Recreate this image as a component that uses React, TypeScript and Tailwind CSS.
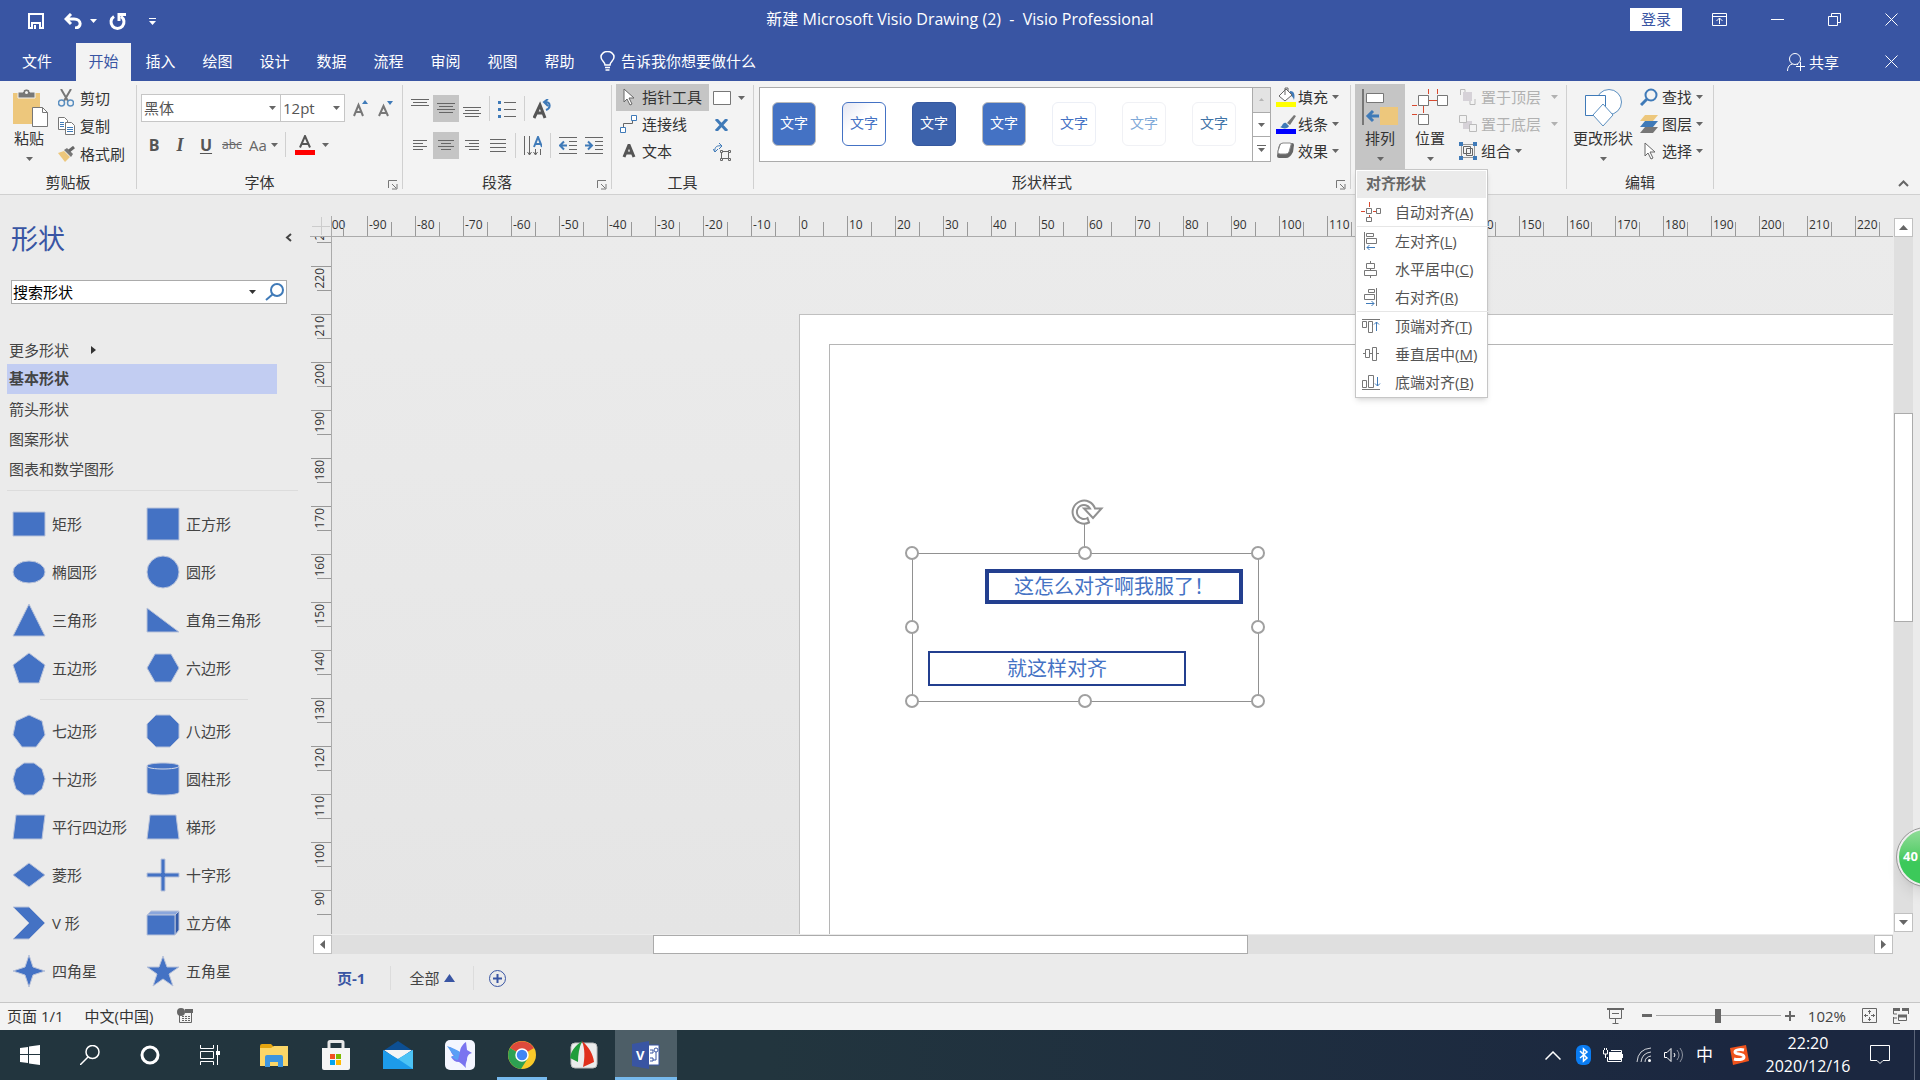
import React from "react";

const BLUE = "#3955a3";

interface IconProps {
  w: number;
  h: number;
  children: React.ReactNode;
  className?: string;
}

const Icon: React.FC<IconProps> = ({ w, h, children, className }) => (
  <svg
    width={w}
    height={h}
    viewBox={`0 0 ${w} ${h}`}
    fill="none"
    stroke="currentColor"
    className={className ? `shrink-0 ${className}` : "shrink-0"}
    aria-hidden="true"
  >
    {children}
  </svg>
);

const Caret = ({ className = "text-[#666]" }: { className?: string }) => (
  <Icon w={7} h={4} className={className}>
    <path d="M0 0h7L3.5 4z" fill="currentColor" stroke="none" />
  </Icon>
);

const Divider = () => <div className="w-px shrink-0 bg-[#d0d0d0] mt-1 mb-[5px]" />;

const SmallDivider = () => <div className="w-px h-[25px] shrink-0 bg-[#d0d0d0] mx-1" />;

const Launcher = () => (
  <button aria-label="更多选项" className="absolute right-1 bottom-1 text-[#777]">
    <Icon w={10} h={10}>
      <path d="M.5 8V.5H9M4 4l4 4M9 4v5H4" />
    </Icon>
  </button>
);

interface GroupProps {
  label: string;
  className: string;
  launcher?: boolean;
  children: React.ReactNode;
}

const Group: React.FC<GroupProps> = ({ label, className, launcher, children }) => (
  <div className={`relative shrink-0 flex flex-col pt-[3px] ${className}`}>
    <div className="h-[87px] flex">{children}</div>
    <div className={`h-[22px] text-center leading-[22px] ${launcher ? "pr-5" : ""}`}>{label}</div>
    {launcher && <Launcher />}
  </div>
);

interface RowButtonProps {
  icon: React.ReactNode;
  label: string;
  caret?: boolean;
  disabled?: boolean;
  wideCaret?: boolean;
}

const RowButton: React.FC<RowButtonProps> = ({ icon, label, caret, disabled, wideCaret }) => (
  <button
    disabled={disabled}
    className={`h-[27px] pb-[2px] flex items-center whitespace-nowrap ${disabled ? "text-[#b1b1b1]" : ""}`}
  >
    <span className="w-[22px] flex shrink-0">{icon}</span>
    {label}
    {caret && (
      <span className={wideCaret ? "ml-[10px]" : "ml-1"}>
        <Caret className={disabled ? "text-[#b1b1b1]" : "text-[#666]"} />
      </span>
    )}
  </button>
);

const SquareButton = ({
  label,
  active,
  children,
}: {
  label: string;
  active?: boolean;
  children: React.ReactNode;
}) => (
  <button
    aria-label={label}
    className={`w-[26px] h-[27px] shrink-0 flex items-center justify-center text-[#666] ${
      active ? "bg-[#c5c5c5]" : ""
    }`}
  >
    {children}
  </button>
);

const BigButton = ({
  label,
  icon,
  className,
}: {
  label: string;
  icon: React.ReactNode;
  className: string;
}) => (
  <button className={`h-[85px] shrink-0 flex flex-col items-center pt-[5px] ${className}`}>
    {icon}
    <span className="leading-[22px] whitespace-nowrap">{label}</span>
    <span className="mt-2">
      <Caret />
    </span>
  </button>
);

const TitleBar = () => (
  <div className="h-10 grid grid-cols-[1fr_auto_1fr] items-center text-white">
    <div className="flex items-center pl-7 pt-[2px]">
      <button aria-label="保存" className="mr-5">
        <Icon w={16} h={16}>
          <path d="M1 1h14v14H1z" strokeWidth="2" />
          <path d="M3 9h10v6H3z" fill="currentColor" stroke="none" />
          <path d="M5 11h6v5H5z" fill={BLUE} stroke="none" />
          <path d="M6 12h2v4H6z" fill="currentColor" stroke="none" />
        </Icon>
      </button>
      <button aria-label="撤消">
        <Icon w={18} h={16}>
          <path d="M2 6h8c8 0 8 9 1 9M7 1L2 6l5 5" strokeWidth="3" />
        </Icon>
      </button>
      <button aria-label="撤消列表" className="ml-2 mr-3">
        <Caret className="text-white" />
      </button>
      <button aria-label="重复">
        <Icon w={18} h={17}>
          <path d="M5 3.5a6.500 6.500 0 1 0 7 0" strokeWidth="3" />
          <path d="M10 8V1.500h7" strokeWidth="3" />
        </Icon>
      </button>
      <button aria-label="自定义快速访问工具栏" className="ml-[22px]">
        <Icon w={7} h={7}>
          <path d="M0 .5h7" />
          <path d="M0 3h7L3.5 7z" fill="currentColor" stroke="none" />
        </Icon>
      </button>
    </div>
    <h1 className="text-[16px] whitespace-pre pb-[2px]">新建 Microsoft Visio Drawing (2)  -  Visio Professional</h1>
    <div className="flex items-center justify-end pr-[22px] pb-px">
      <button className="h-[23px] w-[52px] bg-white text-[#3955a3] leading-[23px] mr-[30px]">登录</button>
      <button aria-label="功能区显示选项" className="mr-11">
        <Icon w={15} h={13}>
          <path d="M.5.5h14v12H.5zM.5 3.5h14M7.5 11V5M4.5 8l3-3 3 3" />
        </Icon>
      </button>
      <button aria-label="最小化" className="mr-11">
        <Icon w={13} h={13}>
          <path d="M0 6.5h13" />
        </Icon>
      </button>
      <button aria-label="还原" className="mr-11">
        <Icon w={13} h={13}>
          <path d="M.5 3.5h9v9h-9zM3.5 3V.5h9v9H10" />
        </Icon>
      </button>
      <button aria-label="关闭">
        <Icon w={13} h={13}>
          <path d="M.5.5l12 12M12.5.5l-12 12" />
        </Icon>
      </button>
    </div>
  </div>
);

const TABS = ["开始", "插入", "绘图", "设计", "数据", "流程", "审阅", "视图", "帮助"];

const TabBar = () => (
  <div className="h-[41px] flex items-end text-white">
    <button className="w-[74px] h-[38px] pb-[3px] mr-[2px]">文件</button>
    <div className="flex gap-[2px]">
      {TABS.map((tab, index) => (
        <button
          key={tab}
          className={`w-[55px] h-[38px] pb-[3px] ${index === 0 ? "bg-[#f3f3f3] text-[#3955a3]" : ""}`}
        >
          {tab}
        </button>
      ))}
    </div>
    <button className="h-[38px] ml-[13px] pb-[2px] flex items-center gap-[6px]">
      <Icon w={15} h={20}>
        <path d="M5 14c0-3-4-4-4-8a6.500 5.500 0 0 1 13 0c0 4-4 5-4 8zM5 16.500h5M5.500 19h4" strokeWidth="1.500" />
      </Icon>
      告诉我你想要做什么
    </button>
    <div className="flex-1" />
    <button className="h-[38px] pb-px flex items-center gap-1 mr-[46px]">
      <Icon w={18} h={18}>
        <circle cx="8" cy="6" r="5.500" />
        <path d="M.5 18c0-4 2-6.500 5-7M10 11l1 1M13.500 9v9M9 13.500h9" />
      </Icon>
      共享
    </button>
    <button aria-label="关闭窗口" className="h-[38px] pb-px mr-[22px]">
      <Icon w={13} h={13}>
        <path d="M.5.5l12 12M12.500.5l-12 12" />
      </Icon>
    </button>
  </div>
);

const ClipboardGroup = () => (
  <Group label="剪贴板" className="w-[136px]">
    <BigButton
      className="w-[38px] ml-[10px]"
      label="粘贴"
      icon={
        <Icon w={36} h={38} className="ml-1">
          <path d="M0 4h27v31H0z" fill="#edc77c" stroke="none" />
          <path d="M5 9V3h5c0-4 7-4 7 0h5v6z" fill="#777" stroke="#f3f3f3" />
          <circle cx="13.500" cy="3.500" r="1.500" fill="#f3f3f3" stroke="none" />
          <path d="M19.500 18.500h10l5 5v14h-15z" fill="#fff" stroke="#777" />
          <path d="M29.500 18.500v5h5" stroke="#777" />
        </Icon>
      }
    />
    <div className="ml-[10px] pt-px">
      <div className="h-7">
        <RowButton
          label="剪切"
          icon={
            <Icon w={16} h={18}>
              <path d="M3 0l7 12M13 0L6 12" stroke="#777" strokeWidth="2" />
              <circle cx="3.500" cy="14" r="3" stroke="#5b8fc0" strokeWidth="1.500" />
              <circle cx="12.500" cy="14" r="3" stroke="#5b8fc0" strokeWidth="1.500" />
            </Icon>
          }
        />
      </div>
      <div className="h-7">
        <RowButton
          label="复制"
          icon={
            <Icon w={18} h={18}>
              <path d="M.5.5h6l3 3v9h-9z" fill="#fff" stroke="#777" />
              <path d="M2 5.500h4M2 7.500h4M2 9.500h4" stroke="#3f7ab8" />
              <path d="M7.500 5.500h6l3 3v9h-9z" fill="#fff" stroke="#777" />
              <path d="M9 10.500h6M9 12.500h6M9 14.500h6" stroke="#3f7ab8" />
            </Icon>
          }
        />
      </div>
      <div className="h-7">
        <RowButton
          label="格式刷"
          icon={
            <Icon w={18} h={16}>
              <path d="M0 7l6-2 6 6-5 5z" fill="#edc77c" stroke="none" />
              <path d="M6 4l3-2 6 6-2 3z" fill="#777" stroke="none" />
              <path d="M11 5l5-4" stroke="#666" strokeWidth="3" />
            </Icon>
          }
        />
      </div>
    </div>
  </Group>
);

const FontGroup = () => (
  <Group label="字体" className="w-[265px]" launcher>
    <div className="pl-1 pt-[10px] text-[#555]">
      <div className="flex items-center h-7">
        <div className="relative flex">
          <select
            aria-label="字体"
            className="appearance-none w-[140px] h-7 bg-white border border-[#c6c6c6] pl-[2px] outline-none"
          >
            <option>黑体</option>
          </select>
          <span className="absolute right-[5px] top-3 pointer-events-none">
            <Caret />
          </span>
        </div>
        <div className="relative flex -ml-px mr-[3px]">
          <select
            aria-label="字号"
            className="appearance-none w-[65px] h-7 bg-white border border-[#c6c6c6] pl-[2px] outline-none"
          >
            <option>12pt</option>
          </select>
          <span className="absolute right-[5px] top-3 pointer-events-none">
            <Caret />
          </span>
        </div>
        <button aria-label="增大字号" className="w-[25px] flex justify-center">
          <Icon w={15} h={17}>
            <path d="M1 16L5.500 5 10 16M3 12h5" strokeWidth="2" stroke="#777" />
            <path d="M9 4l3-4 3 4z" fill="#3f7ab8" stroke="none" />
          </Icon>
        </button>
        <button aria-label="减小字号" className="w-[25px] flex justify-center">
          <Icon w={15} h={17}>
            <path d="M1 16L5.500 6 10 16M3 13h5" strokeWidth="2" stroke="#777" />
            <path d="M9 1h6l-3 4z" fill="#3f7ab8" stroke="none" />
          </Icon>
        </button>
      </div>
      <div className="flex items-center h-[27px] mt-[9px]">
        <SquareButton label="加粗">
          <b className="text-[16px] text-[#555]">B</b>
        </SquareButton>
        <SquareButton label="倾斜">
          <b className="italic font-['Liberation_Serif',serif] text-[18px] text-[#555]">I</b>
        </SquareButton>
        <SquareButton label="下划线">
          <b className="underline underline-offset-2 text-[16px] text-[#555]">U</b>
        </SquareButton>
        <SquareButton label="删除线">
          <span className="line-through text-[12px]">abc</span>
        </SquareButton>
        <button aria-label="更改大小写" className="flex items-center gap-1 ml-1 text-[#666]">
          Aa <Caret />
        </button>
        <div className="w-px h-[25px] bg-[#d0d0d0] ml-[7px] mr-[9px]" />
        <button aria-label="字体颜色" className="flex items-center gap-[7px]">
          <Icon w={20} h={20}>
            <path d="M5 12.500L10 1l5 11.500M7 9h6" strokeWidth="2" stroke="#555" />
            <path d="M0 15h20v5H0z" fill="#f00" stroke="none" />
          </Icon>
          <Caret />
        </button>
      </div>
    </div>
  </Group>
);

const Lines = ({ d, h = 13 }: { d: string; h?: number }) => (
  <Icon w={18} h={h}>
    <path d={d} stroke="#666" />
  </Icon>
);

const ParagraphGroup = () => (
  <Group label="段落" className="w-[208px]" launcher>
    <div className="pl-1 pt-[11px]">
      <div className="flex items-center h-[27px]">
        <SquareButton label="顶端对齐">
          <Lines h={20} d="M0 0.500h18M2 3.500h14M0 6.500h18" />
        </SquareButton>
        <SquareButton label="中部对齐" active>
          <Lines d="M0 1.500h18M2 4.500h14M0 7.500h18M2 10.500h14" />
        </SquareButton>
        <SquareButton label="底端对齐">
          <Lines h={20} d="M0 8.500h18M2 11.500h14M0 14.500h18M2 17.500h14" />
        </SquareButton>
        <SmallDivider />
        <SquareButton label="项目符号">
          <Icon w={18} h={18}>
            <path d="M6 2.500h12M6 9.500h12M6 16.500h12" stroke="#666" />
            <path d="M0 1h3v3H0zM0 8h3v3H0zM0 15h3v3H0z" fill="#3f7ab8" stroke="none" />
          </Icon>
        </SquareButton>
        <SmallDivider />
        <SquareButton label="旋转文本">
          <Icon w={19} h={20}>
            <path d="M1 19L7 6l5 13M3 14h8" strokeWidth="3" stroke="#555" />
            <path d="M13 11c5-2 5-8-1-8M15 0l-4 3 4 4" strokeWidth="2" stroke="#3f7ab8" />
          </Icon>
        </SquareButton>
      </div>
      <div className="flex items-center h-[27px] mt-[10px]">
        <SquareButton label="左对齐">
          <Lines d="M2 1.500h14M2 4.500h10M2 7.500h14M2 10.500h10" />
        </SquareButton>
        <SquareButton label="居中" active>
          <Lines d="M1 1.500h16M4 4.500h10M1 7.500h16M4 10.500h10" />
        </SquareButton>
        <SquareButton label="右对齐">
          <Lines d="M2 1.500h14M6 4.500h10M2 7.500h14M6 10.500h10" />
        </SquareButton>
        <SquareButton label="两端对齐">
          <Lines d="M1 .5h16M1 4.500h16M1 8.500h16M1 12.500h16" />
        </SquareButton>
        <SmallDivider />
        <SquareButton label="文字方向">
          <Icon w={18} h={20}>
            <path d="M.5 0v19M5.500 0v19M11.500 13v6M16.500 13v6M3.500 16l2 3 2-3M9.500 16l2 3 2-3" stroke="#666" />
            <path d="M10 11l4-10 4 10M11 8h6" strokeWidth="2" stroke="#3f7ab8" />
          </Icon>
        </SquareButton>
        <SmallDivider />
        <SquareButton label="减少缩进量">
          <Icon w={18} h={17}>
            <path d="M0 .5h18M10 4.500h8M10 8.500h8M10 12.500h8M0 16.500h18" stroke="#666" />
            <path d="M8 8.500H2M5 4.500l-4 4 4 4" stroke="#3f7ab8" strokeWidth="2" />
          </Icon>
        </SquareButton>
        <SquareButton label="增加缩进量">
          <Icon w={18} h={17}>
            <path d="M0 .5h18M10 4.500h8M10 8.500h8M10 12.500h8M0 16.500h18" stroke="#666" />
            <path d="M0 8.500h6M3 4.500l4 4-4 4" stroke="#3f7ab8" strokeWidth="2" />
          </Icon>
        </SquareButton>
      </div>
    </div>
  </Group>
);

const PointerIcon = () => (
  <Icon w={12} h={18}>
    <path d="M1 1v13l3-3 3 6 2-1-3-6h5z" fill="#fff" stroke="#666" />
  </Icon>
);

const ToolsGroup = () => (
  <Group label="工具" className="w-[141px]">
    <div className="pl-1">
      <div className="w-[93px] bg-[#c5c5c5] pl-[7px]">
        <button className="h-[27px] pb-[2px] flex items-center">
          <span className="w-[19px] flex">
            <PointerIcon />
          </span>
          指针工具
        </button>
      </div>
      <div className="pl-1">
        <RowButton
          label="连接线"
          icon={
            <Icon w={18} h={18}>
              <path d="M3.500 12V8.500h9V5" stroke="#666" />
              <path d="M11.500.5h5v5h-5zM.5 12.500h5v5h-5z" stroke="#3f7ab8" fill="#fff" />
            </Icon>
          }
        />
        <RowButton
          label="文本"
          icon={
            <Icon w={18} h={14}>
              <path d="M4 13L9 1l5 12M5 9h8" strokeWidth="3" stroke="#555" />
            </Icon>
          }
        />
      </div>
    </div>
    <div className="pl-1">
      <button aria-label="矩形" className="h-[27px] flex items-center gap-[7px]">
        <Icon w={18} h={14}>
          <path d="M.5.5h17v13H.5z" fill="#fff" stroke="#777" />
        </Icon>
        <Caret />
      </button>
      <button aria-label="连接点" className="h-[27px] flex items-center">
        <Icon w={18} h={12}>
          <path d="M3 0l11 12M14 0L3 12" stroke="#3f7ab8" strokeWidth="3" />
        </Icon>
      </button>
      <button aria-label="文本块" className="h-[27px] flex items-center">
        <Icon w={18} h={18}>
          <path d="M2 9C1 4 4 2 9 3M6 0l3 3-3 3M0 6l2 3 3-3" stroke="#3f7ab8" />
          <path d="M8.500 8.500h7v7h-7z" stroke="#666" />
          <path
            d="M7.500 7.500h2v2h-2zM15.500 7.500h2v2h-2zM7.500 15.500h2v2h-2zM15.500 15.500h2v2h-2z"
            fill="#f3f3f3"
            stroke="#666"
          />
        </Icon>
      </button>
    </div>
  </Group>
);

const STYLE_TILES = [
  "bg-[#4472c4] text-white border-[#bbb]",
  "bg-gradient-to-br from-[#e4e6f2] to-white to-40% text-[#4472c4] border-[#4472c4]",
  "bg-[#3c62ab] text-white border-[#35589e]",
  "bg-[#4472c4] text-white border-[#bbb]",
  "bg-white text-[#4472c4] border-[#eceff6]",
  "bg-white text-[#7fa9d8] border-[#f0f1f5]",
  "bg-white text-[#3f74a8] border-[#f0f1f5]",
];

const StylesGroup = () => (
  <Group label="形状样式" className="w-[596px]" launcher>
    <div className="mt-[3px] ml-[5px] w-[512px] h-[75px] flex bg-white border border-[#ababab]">
      <div className="flex-1 flex items-center gap-[26px] pl-3 pb-px">
        {STYLE_TILES.map((tile, index) => (
          <button key={index} className={`w-11 h-11 pb-[2px] rounded-md border text-[14px] ${tile}`}>
            文字
          </button>
        ))}
      </div>
      <div className="w-[18px] flex flex-col border-l border-[#ababab] divide-y divide-[#ababab]">
        <button aria-label="上一行" className="flex-1 flex items-center justify-center bg-[#e3e3e3]">
          <Icon w={5} h={3}>
            <path d="M0 3h5L2.500 0z" fill="#b5b5b5" stroke="none" />
          </Icon>
        </button>
        <button aria-label="下一行" className="flex-1 flex items-center justify-center">
          <Caret />
        </button>
        <button aria-label="其他样式" className="flex-1 flex items-center justify-center text-[#666]">
          <Icon w={9} h={8}>
            <path d="M0 .5h9" />
            <path d="M1 3h7L4.500 7z" fill="currentColor" stroke="none" />
          </Icon>
        </button>
      </div>
    </div>
    <div className="ml-[5px]">
      <RowButton
        label="填充"
        caret
        icon={
          <Icon w={20} h={20}>
            <path d="M14 4c5 0 5 5 4 9-1-3-2-4-5-5z" fill="#3f7ab8" stroke="none" />
            <path d="M3 9l7-7 6 6-7 6z" fill="#fff" stroke="#666" />
            <path d="M9 8V1h3v3" stroke="#666" />
            <path d="M0 15h20v5H0z" fill="#ff0" stroke="none" />
          </Icon>
        }
      />
      <RowButton
        label="线条"
        caret
        icon={
          <Icon w={20} h={20}>
            <path d="M4 13c3 0 2-5 6-4l3 3c-1 3-6 3-9 1z" fill="#3f7ab8" stroke="none" />
            <path d="M11 9l7-8 2 1-6 9z" fill="#777" stroke="none" />
            <path d="M0 15h20v5H0z" fill="#00f" stroke="none" />
          </Icon>
        }
      />
      <RowButton
        label="效果"
        caret
        icon={
          <Icon w={19} h={17}>
            <path d="M6 1h10q2 0 2 2l-1 7q-3 6-7 6H3q-2 0-2-2l1-7q1-6 4-6z" fill="#666" stroke="none" />
            <path d="M7 1h7q2 0 1 2l-2 7q-1 2-3 2H4q-3 0-2-3l2-6q1-2 3-2z" fill="#fff" stroke="#888" />
          </Icon>
        }
      />
    </div>
  </Group>
);

const MENU_ITEMS = [
  {
    label: "自动对齐",
    hotkey: "A",
    icon: (
      <>
        <path d="M0 9.500h4M12 9.500h3M8.500 0v5M8.500 13v2" stroke="#d8492f" />
        <path d="M5.500 6.500h5v5h-5zM15.500 6.500h4v5h-4zM5.500 15.500h5v4h-5z" stroke="#777" />
      </>
    ),
  },
  {
    label: "左对齐",
    hotkey: "L",
    divided: true,
    icon: (
      <>
        <path d="M3.500 1v18M5.500 2.500h7v3h-7zM5.500 7.500h10v5h-10z" stroke="#777" />
        <path d="M14 16.500H6M8.500 14L6 16.500 8.500 19" stroke="#3f7ab8" />
      </>
    ),
  },
  {
    label: "水平居中",
    hotkey: "C",
    icon: <path d="M9.500 2v2M5.500 4.500h8v5h-8zM9.500 10v2M3.500 11.500h12v5h-12zM9.500 17v2" stroke="#777" />,
  },
  {
    label: "右对齐",
    hotkey: "R",
    icon: (
      <>
        <path d="M15.500 1v18M7.500 2.500h6v3h-6zM3.500 7.500h10v5h-10z" stroke="#777" />
        <path d="M5 16.500h8M10.500 14l2.500 2.500-2.500 2.500" stroke="#3f7ab8" />
      </>
    ),
  },
  {
    label: "顶端对齐",
    hotkey: "T",
    divided: true,
    icon: (
      <>
        <path d="M1 3.500h18M1.500 5.500h4v6h-4zM7.500 5.500h4v11h-4z" stroke="#777" />
        <path d="M15.500 15V6M13 8.500L15.500 6 18 8.500" stroke="#3f7ab8" />
      </>
    ),
  },
  {
    label: "垂直居中",
    hotkey: "M",
    icon: <path d="M2 9.500h2M4.500 5.500h4v8h-4zM9 9.500h2M11.500 3.500h4v13h-4zM16 9.500h2" stroke="#777" />,
  },
  {
    label: "底端对齐",
    hotkey: "B",
    icon: (
      <>
        <path d="M1 17.500h18M1.500 8.500h4v7h-4zM7.500 3.500h5v12h-5z" stroke="#777" />
        <path d="M16.500 5v9M14 11.500l2.500 2.500 2.500-2.500" stroke="#3f7ab8" />
      </>
    ),
  },
];

const AlignMenu = () => (
  <div
    role="menu"
    className="absolute z-20 top-[85px] left-0 w-[133px] p-px bg-white border border-[#c6c6c6] shadow-md text-[#555]"
  >
    <div className="h-[27px] pl-[9px] leading-[25px] bg-[#ebebeb] font-bold text-[#666]">对齐形状</div>
    {MENU_ITEMS.map((item) => (
      <button
        key={item.label}
        role="menuitem"
        className={`w-full h-7 flex items-center pl-1 whitespace-nowrap ${
          item.divided ? "box-content border-t border-[#e6e6e6]" : ""
        }`}
      >
        <Icon w={20} h={20} className="mr-[14px]">
          {item.icon}
        </Icon>
        {item.label}(<u>{item.hotkey}</u>)
      </button>
    ))}
  </div>
);

const ArrangeGroup = () => (
  <div className="relative shrink-0 w-[215px] flex pt-[3px] pl-1">
    <div className="relative">
      <BigButton
        className="w-[50px] bg-[#c5c5c5]"
        label="排列"
        icon={
          <Icon w={38} h={38}>
            <path d="M2 0v36" stroke="#777" strokeWidth="2" />
            <path d="M5.500 4.500h17v9h-17z" fill="#fff" stroke="#777" />
            <path d="M19 18h18v18H19z" fill="#edc77c" stroke="none" />
            <path d="M18 27H7M12 22l-5 5 5 5" stroke="#3f7ab8" strokeWidth="3" />
          </Icon>
        }
      />
      <AlignMenu />
    </div>
    <BigButton
      className="w-[50px]"
      label="位置"
      icon={
        <Icon w={38} h={38}>
          <path d="M17.500 0v5M26.500 0v5M18 11.500h8M1 16.500h5M12.500 17v7M1 25.500h5" stroke="#d8492f" />
          <path
            d="M7.500 6.500h10v10h-10zM26.500 6.500h10v10h-10zM7.500 25.500h10v10h-10z"
            fill="#fff"
            stroke="#777"
          />
        </Icon>
      }
    />
    <div className="ml-1">
      <RowButton
        label="置于顶层"
        caret
        wideCaret
        disabled
        icon={
          <Icon w={18} h={18}>
            <path d="M1.500 7V1.500H6V5M16 11v5.500h-5V13" stroke="#bbb" />
            <path d="M4 4h9v9H4z" fill="#d6d2d8" stroke="none" />
          </Icon>
        }
      />
      <RowButton
        label="置于底层"
        caret
        wideCaret
        disabled
        icon={
          <Icon w={19} h={19}>
            <path d="M4 7h9v8H4z" fill="#d6d2d8" stroke="none" />
            <path d="M.5 1.500h7v7h-7zM10.500 10.500h7v7h-7z" fill="#f3f3f3" stroke="#bbb" />
          </Icon>
        }
      />
      <RowButton
        label="组合"
        caret
        icon={
          <Icon w={18} h={18}>
            <path d="M2.500 2.500h13v13h-13z" stroke="#999" />
            <path d="M4.500 4.500h7v7h-7zM7.500 6.500h6v7h-6z" stroke="#666" />
            <path d="M0 0h4v4H0zM14 0h4v4h-4zM0 14h4v4H0zM14 14h4v4h-4z" fill="#3f7ab8" stroke="none" />
          </Icon>
        }
      />
    </div>
  </div>
);

const EditGroup = () => (
  <Group label="编辑" className="w-[146px]">
    <BigButton
      className="w-[60px] ml-[6px]"
      label="更改形状"
      icon={
        <Icon w={40} h={38}>
          <circle cx="26" cy="13" r="12.500" fill="#fff" stroke="#5b8fc0" />
          <path d="M2.500 6.500h20v20h-20z" fill="#fff" stroke="#3f7ab8" />
          <path d="M20 15l10 11-10 11-10-11z" fill="#fff" stroke="#5b8fc0" />
        </Icon>
      }
    />
    <div className="ml-[7px]">
      <RowButton
        label="查找"
        caret
        icon={
          <Icon w={18} h={18}>
            <circle cx="11" cy="7" r="5.500" stroke="#3f7ab8" strokeWidth="2" />
            <path d="M7 11l-6 6" stroke="#3f7ab8" strokeWidth="3" />
          </Icon>
        }
      />
      <RowButton
        label="图层"
        caret
        icon={
          <Icon w={18} h={18}>
            <path d="M5 12h13l-5 6H0z" fill="#777" stroke="none" />
            <path d="M5 6h13l-5 6H0z" fill="#3f7ab8" stroke="none" />
            <path d="M5 0h13l-5 6H0z" fill="#edc77c" stroke="none" />
          </Icon>
        }
      />
      <RowButton
        label="选择"
        caret
        icon={
          <span className="pl-1">
            <PointerIcon />
          </span>
        }
      />
    </div>
  </Group>
);

const Ribbon = () => (
  <div className="relative h-[114px] shrink-0 flex bg-[#f3f3f3] border-b border-[#d0d0d0] text-[#333]">
    <ClipboardGroup />
    <Divider />
    <FontGroup />
    <Divider />
    <ParagraphGroup />
    <Divider />
    <ToolsGroup />
    <Divider />
    <StylesGroup />
    <Divider />
    <ArrangeGroup />
    <Divider />
    <EditGroup />
    <Divider />
    <button aria-label="折叠功能区" className="ml-auto self-end mr-[11px] mb-[7px] text-[#666]">
      <Icon w={11} h={7}>
        <path d="M1 6l4.500-4.500L10 6" strokeWidth="2" />
      </Icon>
    </button>
  </div>
);

const STENCILS = ["箭头形状", "图案形状", "图表和数学图形"];

interface ShapeItem {
  name: string;
  shape: React.ReactNode;
}

const BASIC_SHAPES: ShapeItem[] = [
  { name: "矩形", shape: <path d="M1 5h32v24H1z" /> },
  { name: "正方形", shape: <path d="M1 1h32v32H1z" /> },
  { name: "椭圆形", shape: <ellipse cx="17" cy="17" rx="16" ry="11" /> },
  { name: "圆形", shape: <circle cx="17" cy="17" r="16" /> },
  { name: "三角形", shape: <polygon points="17,1 33,33 1,33" /> },
  { name: "直角三角形", shape: <polygon points="1,5 33,29 1,29" /> },
  { name: "五边形", shape: <polygon points="17,2 33,14 27,32 7,32 1,14" /> },
  { name: "六边形", shape: <polygon points="1,17 9,3 25,3 33,17 25,31 9,31" /> },
];

const MORE_SHAPES: ShapeItem[] = [
  { name: "七边形", shape: <polygon points="17,1 30,7 33,21 24,33 10,33 1,21 4,7" /> },
  { name: "八边形", shape: <polygon points="10,1 24,1 33,10 33,24 24,33 10,33 1,24 1,10" /> },
  { name: "十边形", shape: <polygon points="12,1 22,1 30,7 33,17 30,27 22,33 12,33 4,27 1,17 4,7" /> },
  {
    name: "圆柱形",
    shape: (
      <>
        <path d="M1 4c0-4 32-4 32 0v26c0 4-32 4-32 0z" />
        <path d="M1 4c0 4 32 4 32 0" stroke="#d5dae8" />
      </>
    ),
  },
  { name: "平行四边形", shape: <polygon points="4,5 33,5 30,29 1,29" /> },
  { name: "梯形", shape: <polygon points="4,5 30,5 33,29 1,29" /> },
  { name: "菱形", shape: <polygon points="17,5 33,17 17,29 1,17" /> },
  { name: "十字形", shape: <path d="M15 1h4v14h14v4H19v14h-4V19H1v-4h14z" /> },
  { name: "V 形", shape: <polygon points="1,1 17,1 33,17 17,33 1,33 17,17" /> },
  {
    name: "立方体",
    shape: (
      <>
        <path d="M1 9l4-4h28l-4 4z" fill="#8aa6dc" />
        <path d="M29 9l4-4v19l-4 5z" fill="#345ba8" />
        <path d="M1 9h28v20H1z" />
      </>
    ),
  },
  { name: "四角星", shape: <polygon points="17,1 21,13 33,17 21,21 17,33 13,21 1,17 13,13" /> },
  { name: "五角星", shape: <polygon points="17,2 21,13 33,13 23,20 27,32 17,25 7,32 11,20 1,13 13,13" /> },
];

const ShapeGrid = ({ items }: { items: ShapeItem[] }) => (
  <div className="grid grid-cols-[134px_1fr] pl-3">
    {items.map((item) => (
      <button key={item.name} className="h-12 flex items-center gap-[6px]">
        <svg width="34" height="34" viewBox="0 0 34 34" fill="#4472c4" stroke="#b9c3da" aria-hidden="true">
          {item.shape}
        </svg>
        {item.name}
      </button>
    ))}
  </div>
);

const ShapesPanel = () => (
  <aside className="w-[310px] shrink-0 flex flex-col pt-6 text-[#444]">
    <div className="h-10 flex items-center justify-between pl-[11px] pr-[18px]">
      <h2 className="text-[27px] leading-10 text-[#3955a3]">形状</h2>
      <button aria-label="折叠形状窗口" className="pb-1">
        <Icon w={7} h={9}>
          <path d="M6 1L2 4.500 6 8" strokeWidth="2" />
        </Icon>
      </button>
    </div>
    <div className="mt-[21px] ml-[11px] w-[276px] h-6 flex items-center bg-white border border-[#ababab] text-black">
      <input
        aria-label="搜索形状"
        defaultValue="搜索形状"
        className="flex-1 min-w-0 h-5 pl-px outline-none bg-transparent"
      />
      <button aria-label="搜索选项" className="mr-[9px]">
        <Caret className="text-[#333]" />
      </button>
      <button aria-label="搜索" className="mr-[2px]">
        <Icon w={19} h={18}>
          <circle cx="12" cy="7" r="6" stroke="#3f7ab8" strokeWidth="2" />
          <path d="M8 11l-7 6" stroke="#3f7ab8" strokeWidth="2" />
        </Icon>
      </button>
    </div>
    <div className="mt-[31px] pl-[7px] flex flex-col">
      <button className="h-[29px] pl-[2px] flex items-center gap-[22px]">
        更多形状
        <Icon w={5} h={8}>
          <path d="M0 0v8l5-4z" fill="#333" stroke="none" />
        </Icon>
      </button>
      <button className="w-[270px] h-[30px] pl-[2px] pb-[2px] text-left font-bold bg-[#c2cdf2]">基本形状</button>
      {STENCILS.map((name) => (
        <button key={name} className="h-[30px] pl-[2px] text-left">
          {name}
        </button>
      ))}
    </div>
    <div className="mt-[6px] ml-[7px] mr-3 h-px bg-[#dcdcdc]" />
    <div className="mt-[9px]">
      <ShapeGrid items={BASIC_SHAPES} />
    </div>
    <div className="mt-[7px] ml-10 w-[208px] h-px bg-[#dcdcdc]" />
    <div className="mt-[7px]">
      <ShapeGrid items={MORE_SHAPES} />
    </div>
  </aside>
);

const H_MARKS = Array.from({ length: 33 }, (_, i) => -100 + i * 10);
const V_MARKS = Array.from({ length: 15 }, (_, i) => 230 - i * 10);

const HorizontalRuler = () => (
  <div className="flex-1 min-w-0 overflow-hidden border-b border-[#ababab]">
    <div className="flex items-end h-5 -ml-[13px] text-[12px] leading-[18px] text-[#333]">
      {H_MARKS.map((mark) => (
        <div key={mark} className="w-12 shrink-0 flex items-end">
          <div className="w-6 h-5 pl-px border-l border-[#999] whitespace-nowrap">{mark}</div>
          <div className="w-6 h-[14px] border-l border-[#999]" />
        </div>
      ))}
    </div>
  </div>
);

const VerticalRuler = () => (
  <div className="w-[22px] shrink-0 overflow-hidden border-r border-[#ababab]">
    <div className="flex flex-col -mt-[19px] text-[12px] leading-[18px] text-[#333]">
      {V_MARKS.map((mark) => (
        <div key={mark} className="h-12 shrink-0 flex flex-col items-end">
          <div className="w-5 h-6 pt-px border-t border-[#999]">
            <span className="block [writing-mode:vertical-rl] rotate-180 h-fit">{mark}</span>
          </div>
          <div className="w-[14px] h-6 border-t border-[#999]" />
        </div>
      ))}
    </div>
  </div>
);

const HANDLES = [
  "-left-2 -top-2",
  "left-[165px] -top-2",
  "-right-[7px] -top-2",
  "-left-2 top-[66px]",
  "-right-[7px] top-[66px]",
  "-left-2 -bottom-[7px]",
  "left-[165px] -bottom-[7px]",
  "-right-[7px] -bottom-[7px]",
];

const Canvas = () => (
  <div className="relative flex-1 min-w-0 overflow-hidden bg-gradient-to-b from-[#ebebeb] to-[#e5e5e5]">
    <div className="absolute left-[467px] top-[77px] right-0 bottom-0 bg-white border-l border-t border-[#c0c0c0]">
      <div className="w-full h-full pl-[29px] pt-[29px]">
        <div className="w-full h-full border-l border-t border-[#b5b5b5]" />
      </div>
    </div>
    {/* selected shapes */}
    <div className="absolute left-[653px] top-[332px] w-[258px] h-[35px] border-4 border-[#233f8f] text-[#4472c4] text-[20px] leading-[27px] text-center whitespace-nowrap">
      这怎么对齐啊我服了！
    </div>
    <div className="absolute left-[596px] top-[414px] w-[258px] h-[35px] border-2 border-[#233f8f] text-[#4472c4] text-[20px] leading-[31px] text-center whitespace-nowrap">
      就这样对齐
    </div>
    <div className="absolute left-[580px] top-[316px] w-[347px] h-[149px] border border-[#919191]">
      <div className="absolute left-[171px] -top-[30px] w-px h-[30px] bg-[#919191]" />
      <Icon w={34} h={28} className="absolute left-[158px] -top-[56px] text-[#919191]">
        <path
          d="M18 24.500A11.500 11.500 0 1 1 24 10.500h6.500L22 20l-9-9.500h6A7 7 0 1 0 16.500 20z"
          fill="#fff"
          strokeWidth="2"
        />
      </Icon>
      {HANDLES.map((place) => (
        <span key={place} className={`absolute w-[14px] h-[14px] rounded-full bg-white border-2 border-[#a0a0a0] ${place}`} />
      ))}
    </div>
  </div>
);

const ScrollButton = ({ label, d }: { label: string; d: string }) => (
  <button
    aria-label={label}
    className="w-[19px] h-[19px] shrink-0 flex items-center justify-center bg-white border border-[#c0c0c0] text-[#666]"
  >
    <Icon w={9} h={9}>
      <path d={d} fill="currentColor" stroke="none" />
    </Icon>
  </button>
);

const Workspace = () => (
  <section className="flex-1 min-w-0 flex flex-col">
    <div className="flex-1 min-h-0 flex pr-[7px]">
      <div className="flex-1 min-w-0 flex flex-col pt-[21px]">
        <div className="h-[21px] shrink-0 flex">
          <div className="w-[22px] shrink-0 border-r border-b border-[#ababab]">
            <Icon w={20} h={20}>
              <path d="M2 10.500h18M11.500 1v18" stroke="#ccc" />
            </Icon>
          </div>
          <HorizontalRuler />
        </div>
        <div className="flex-1 min-h-0 flex">
          <VerticalRuler />
          <Canvas />
        </div>
        <div className="h-5 shrink-0 flex items-end pl-[3px]">
          <ScrollButton label="向左滚动" d="M7 0v9L2 4.500z" />
          <div className="flex-1 h-[19px] bg-[#dfdfdf] flex">
            <div className="w-[20.8%]" />
            <div className="w-[38.6%] bg-white border border-[#ababab]" />
          </div>
          <ScrollButton label="向右滚动" d="M2 0v9l5-4.500z" />
        </div>
      </div>
      <div className="w-5 shrink-0 flex flex-col pl-px pt-[23px] pb-[22px]">
        <ScrollButton label="向上滚动" d="M0 7h9L4.500 2z" />
        <div className="flex-1 bg-[#dfdfdf]">
          <div className="h-[26%]" />
          <div className="h-[31%] bg-white border border-[#ababab]" />
        </div>
        <ScrollButton label="向下滚动" d="M0 2h9L4.500 7z" />
      </div>
    </div>
    <div className="h-12 shrink-0 flex items-center pl-[27px] text-[#444]">
      <button className="font-bold text-[#3955a3]">页-1</button>
      <div className="w-px h-6 bg-[#dcdcdc] ml-[25px] mr-[18px]" />
      <button className="flex items-center gap-[5px]">
        全部
        <Icon w={11} h={8}>
          <path d="M0 8h11L5.500 0z" fill={BLUE} stroke="none" />
        </Icon>
      </button>
      <div className="w-px h-6 bg-[#dcdcdc] ml-[18px] mr-[15px]" />
      <button aria-label="插入页">
        <Icon w={17} h={17}>
          <circle cx="8.500" cy="8.500" r="8" stroke={BLUE} />
          <path d="M8.500 4v9M4 8.500h9" stroke={BLUE} strokeWidth="2" />
        </Icon>
      </button>
    </div>
  </section>
);

const StatusBar = () => (
  <footer className="h-7 shrink-0 flex items-center bg-[#f3f3f3] border-t border-[#c6c6c6] pl-[7px] pr-[11px] pb-[2px] text-[#333] whitespace-nowrap">
    <button className="mr-[21px]">页面 1/1</button>
    <button className="mr-6">中文(中国)</button>
    <button aria-label="宏录制">
      <Icon w={16} h={15}>
        <path d="M2.500 5.500v9h12V2.500H8" stroke="#666" />
        <path d="M8 1h8v4H8z" fill="#666" stroke="none" />
        <circle cx="4" cy="4" r="4" fill="#666" stroke="none" />
        <path d="M5 8.500h8M5 10.500h8M5 12.500h8" stroke="#666" strokeDasharray="2 1" />
      </Icon>
    </button>
    <div className="flex-1" />
    <button aria-label="演示模式" className="mr-[18px] text-[#666]">
      <Icon w={17} h={16}>
        <path d="M0 1h17" strokeWidth="2" />
        <path d="M2.500 2v8.500h12V2M5 5.500h7M8.500 11v4M5.500 15.500h6" />
      </Icon>
    </button>
    <button aria-label="缩小" className="mr-1 text-[#666]">
      <Icon w={10} h={10}>
        <path d="M0 4.500h10" strokeWidth="3" />
      </Icon>
    </button>
    <input
      type="range"
      aria-label="缩放"
      defaultValue={50}
      className="w-[125px] h-[14px] appearance-none bg-[linear-gradient(#aaa,#aaa)] bg-[length:100%_1px] bg-center bg-no-repeat [&::-webkit-slider-thumb]:appearance-none [&::-webkit-slider-thumb]:w-[6px] [&::-webkit-slider-thumb]:h-[14px] [&::-webkit-slider-thumb]:bg-[#666]"
    />
    <button aria-label="放大" className="ml-1 mr-[13px] text-[#666]">
      <Icon w={10} h={10}>
        <path d="M0 5h10M5 0v10" strokeWidth="2" />
      </Icon>
    </button>
    <button className="mr-4 text-[#444]">102%</button>
    <button aria-label="适应窗口大小" className="mr-4 text-[#666]">
      <Icon w={15} h={15}>
        <path d="M.5.5h14v14H.5zM7.500 2v4M7.500 9v4M2 7.500h4M9 7.500h4M6 3.500h3M6 11.500h3M3.500 6v3M11.500 6v3" />
      </Icon>
    </button>
    <button aria-label="切换窗口" className="text-[#666]">
      <Icon w={16} h={16}>
        <path d="M0 1.500h7M9 1.500h7M5 8h9" strokeWidth="3" />
        <path d="M.5 2v4H4M15.500 2v4M5.500 7v5.500h8V7M.5 9v6.500H7M0 10h4" />
      </Icon>
    </button>
  </footer>
);

const TaskButton = ({ label, state, children }: { label: string; state?: string; children: React.ReactNode }) => (
  <button
    aria-label={label}
    className={`relative w-[62px] h-full flex items-center justify-center ${state === "active" ? "bg-[#4d5e67]" : ""}`}
  >
    {children}
    {state === "open" && <span className="absolute bottom-0 left-[6px] w-[50px] h-[3px] bg-[#76b9ed]" />}
    {state === "active" && <span className="absolute bottom-0 left-0 w-full h-[3px] bg-[#76b9ed]" />}
  </button>
);

const Taskbar = () => (
  <div className="h-[50px] shrink-0 flex items-center bg-gradient-to-r from-[#22353e] from-40% to-[#1b2740] to-90% text-white">
    <div className="flex h-full">
      <button aria-label="开始菜单" className="w-[60px] flex items-center justify-center">
        <Icon w={20} h={20}>
          <path d="M0 3l8-1v7H0zM9 1.500L20 0v9H9zM0 10h8v8l-8-1zM9 10h11v10L9 18.500z" fill="currentColor" stroke="none" />
        </Icon>
      </button>
      <button aria-label="任务栏搜索" className="w-[60px] flex items-center justify-center">
        <Icon w={20} h={20}>
          <circle cx="12.500" cy="7" r="6.500" strokeWidth="1.500" />
          <path d="M8 12l-8 8" strokeWidth="1.500" />
        </Icon>
      </button>
      <button aria-label="Cortana" className="w-[60px] flex items-center justify-center">
        <Icon w={20} h={20}>
          <circle cx="10" cy="10" r="8" strokeWidth="3" />
        </Icon>
      </button>
      <button aria-label="任务视图" className="w-[60px] flex items-center justify-center mr-[3px]">
        <Icon w={20} h={20}>
          <path d="M.5 0v3.500h13V0M.5 6.500h13v7H.5zM.5 20v-3.500h13V20M17.500 0v20" />
          <path d="M16 6h4v4h-4z" fill="currentColor" stroke="none" />
        </Icon>
      </button>
      <TaskButton label="文件资源管理器">
        <Icon w={28} h={24}>
          <path d="M0 3q0-2 2-2h9l3 3h13v18H0z" fill="#e5a50f" stroke="none" />
          <path d="M0 5h11l3-2h14v20H0z" fill="#fbd667" stroke="none" />
          <path d="M5 24V14q0-2 2-2h14q2 0 2 2v10h-5v-5h-8v5z" fill="#3d95df" stroke="none" />
        </Icon>
      </TaskButton>
      <TaskButton label="Microsoft Store">
        <Icon w={30} h={30}>
          <path d="M8 9V2.500q0-1 1-1h12q1 0 1 1V9" stroke="#e8e8e8" strokeWidth="3" />
          <path d="M1 8h28v20q0 2-2 2H3q-2 0-2-2z" fill="#f5f5f5" stroke="none" />
          <path d="M9 14h5v5H9z" fill="#f25022" stroke="none" />
          <path d="M15 14h5v5h-5z" fill="#7fba00" stroke="none" />
          <path d="M9 20h5v5H9z" fill="#00a4ef" stroke="none" />
          <path d="M15 20h5v5h-5z" fill="#ffb900" stroke="none" />
        </Icon>
      </TaskButton>
      <TaskButton label="邮件">
        <Icon w={30} h={28}>
          <path d="M0 10L15 0l15 10v6H0z" fill="#0d4f93" stroke="none" />
          <path d="M1 9h28L15 19z" fill="#f5f5f5" stroke="none" />
          <path d="M0 9l15 9 15-9v19H0z" fill="#1d9bea" stroke="none" />
          <path d="M30 9v19L15 18z" fill="#4cc3f5" stroke="none" />
        </Icon>
      </TaskButton>
      <TaskButton label="迅雷">
        <Icon w={30} h={30}>
          <rect width="30" height="30" rx="5" fill="#f4f6ff" stroke="none" />
          <path
            d="M5 7c4 3 8 4 10 5 0-4 3-8 6-10l1 8 5 3c-4 1-5 4-5 7-1 3-2 5-1 8-3-3-5-5-7-6-4 0-6-2-8-5h4C7 15 5 11 5 7z"
            fill="#7a74f0"
            stroke="none"
          />
          <path d="M2 6c6 2 10 4 13 6l-2 8c-3 0-5-2-7-4h4C7 14 5 10 2 6z" fill="#5aa0f5" stroke="none" />
        </Icon>
      </TaskButton>
      <TaskButton label="Google Chrome" state="open">
        <Icon w={28} h={28}>
          <circle cx="14" cy="14" r="14" fill="#f9c929" stroke="none" />
          <path d="M14 14L2 7a14 14 0 0 1 24 0z" fill="#df4a3c" stroke="none" />
          <path d="M2 7a14 14 0 0 0 11 21l7-11-6-3z" fill="#2ea152" stroke="none" />
          <circle cx="14" cy="14" r="6" fill="#4285f4" stroke="#fff" strokeWidth="1.500" />
        </Icon>
      </TaskButton>
      <TaskButton label="FastStone">
        <Icon w={28} h={28}>
          <rect x="1" y="2" width="26" height="25" rx="4" fill="#ececec" stroke="#bbb" />
          <path d="M12 0C5 5 1 10 0 17l8 4c0-7 1-14 4-21z" fill="#1f9d3a" stroke="none" />
          <path d="M12 0c7 6 11 13 12 21l-11 5c2-9 2-18-1-26z" fill="#e0301c" stroke="none" />
        </Icon>
      </TaskButton>
      <TaskButton label="Visio" state="active">
        <svg width="28" height="28" viewBox="0 0 28 28" aria-hidden="true">
          <path d="M14 4h13v20H14z" fill="#fff" stroke={BLUE} />
          <path d="M18 9h3v3h-3M18 20h3v-3h-3M21 19h3v-8" fill="none" stroke={BLUE} />
          <circle cx="24" cy="9" r="2" fill="#fff" stroke={BLUE} />
          <path d="M0 3l17-3v28L0 25z" fill={BLUE} />
          <text x="4" y="19" fontSize="13" fontWeight="bold" fill="#fff">
            V
          </text>
        </svg>
      </TaskButton>
    </div>
    <div className="flex-1" />
    <div className="flex items-center h-full">
      <button aria-label="显示隐藏的图标" className="mr-[15px]">
        <Icon w={16} h={9}>
          <path d="M.5 8.500L8 1l7.500 7.500" strokeWidth="1.500" />
        </Icon>
      </button>
      <button aria-label="蓝牙" className="mr-3">
        <Icon w={15} h={20}>
          <rect width="15" height="20" rx="6" fill="#0a7cf2" stroke="none" />
          <path d="M4 6l7 7-3.500 3V4L11 7l-7 6" strokeWidth="1.500" />
        </Icon>
      </button>
      <button aria-label="电池" className="mr-[13px]">
        <Icon w={20} h={14}>
          <path d="M6 4h12v8H6z" fill="currentColor" stroke="none" />
          <path d="M8 2.500h10.500v11h-14V9M19.500 6v4M.5 2v4h4V2M1.500 0v2M3.500 0v2M2.500 6v4" />
        </Icon>
      </button>
      <button aria-label="网络" className="mr-3">
        <Icon w={16} h={16}>
          <circle cx="13.500" cy="13.500" r="1.500" fill="currentColor" stroke="none" />
          <path d="M9 15q0-5 6-6M5 15Q6 6 15 5M1 15Q2 2 15 1" opacity=".8" />
        </Icon>
      </button>
      <button aria-label="音量" className="mr-3">
        <Icon w={20} h={16}>
          <path d="M.5 5.500H3l4-4v13l-4-4H.5zM10 6q2 2 0 4" />
          <path d="M13 3q4 5 0 10M16 1q5 7 0 14" opacity=".5" />
        </Icon>
      </button>
      <button className="mr-4 text-[17px] leading-6">中</button>
      <button aria-label="搜狗输入法" className="mr-4">
        <svg width="20" height="20" viewBox="0 0 20 20" aria-hidden="true">
          <path d="M1 3l16-3 3 16-16 4z" fill="#f0531c" />
          <path d="M15 5c-4-1-9 0-9 2 0 3 9 1 9 5 0 3-7 3-10 2" fill="none" stroke="#fff" strokeWidth="3" />
        </svg>
      </button>
      <button className="w-[86px] mr-[19px] text-[16px] leading-[23px] text-center whitespace-nowrap">
        22:20
        <br />
        2020/12/16
      </button>
      <button aria-label="通知" className="mr-6">
        <Icon w={20} h={20}>
          <path d="M.5.500h19v15H13l-3 3-3-3H.5z" />
        </Icon>
      </button>
      <div className="w-px h-full bg-[#5a6478] mr-[5px]" />
    </div>
  </div>
);

const App: React.FC = () => {
  return (
    <div className="h-screen w-full flex flex-col overflow-hidden bg-[#ebebeb] text-[15px] leading-5 font-['Open_Sans','Noto_Sans_CJK_SC',sans-serif]">
      <header className="shrink-0 bg-[#3955a3]">
        <TitleBar />
        <TabBar />
      </header>
      <Ribbon />
      <main className="relative flex-1 min-h-0 flex">
        <ShapesPanel />
        <Workspace />
        <div className="absolute -right-[35px] bottom-[116px] w-[58px] h-[58px] rounded-full border-2 border-[#eee] bg-gradient-to-b from-[#8fdc98] to-[#3cc95a] to-60% shadow-lg pl-1 text-[13px] leading-[52px] font-bold text-white outline outline-[#999]">
          40
        </div>
      </main>
      <StatusBar />
      <Taskbar />
    </div>
  );
};

export default App;
